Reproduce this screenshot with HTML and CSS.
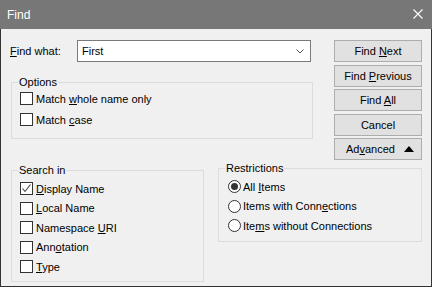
FILE: index.html
```html
<!DOCTYPE html>
<html lang="en">
<head>
    <meta charset="UTF-8">
    <title>Find</title>
    <link rel="stylesheet" href="styles.css">
</head>
<body>
    <div class="window">
        <header class="titlebar">
            <span class="title">Find</span>
            <svg class="close" width="10" height="10" viewBox="0 0 10 10">
                <path d="M0.5 0.5 L9.5 9.5 M9.5 0.5 L0.5 9.5" stroke="#fff" stroke-width="1.1" fill="none"/>
            </svg>
        </header>
        <div class="client">
            <div class="top">
                <div class="left">
                    <div class="find-row">
                        <label class="find-label"><u>F</u>ind what:</label>
                        <div class="combo">
                            <span>First</span>
                            <svg class="chevron" width="8" height="5" viewBox="0 0 8 5">
                                <path d="M0.5 0.5 L4 4 L7.5 0.5" stroke="#555" stroke-width="1" fill="none"/>
                            </svg>
                        </div>
                    </div>
                    <fieldset class="group options">
                        <legend>Options</legend>
                        <div class="check"><span class="box"></span><span>Match <u>w</u>hole name only</span></div>
                        <div class="check"><span class="box"></span><span>Match <u>c</u>ase</span></div>
                    </fieldset>
                </div>
                <div class="buttons">
                    <button>Find <u>N</u>ext</button>
                    <button>Find <u>P</u>revious</button>
                    <button>Find <u>A</u>ll</button>
                    <button>Cancel</button>
                    <button class="advanced"><span>Ad<u>v</u>anced</span><span class="tri"></span></button>
                </div>
            </div>
            <div class="bottom">
                <fieldset class="group search">
                    <legend>Search in</legend>
                    <div class="check"><span class="box checked">
                        <svg width="11" height="11" viewBox="0 0 11 11"><path d="M1.5 5.5 L4 8.5 L9.5 1.5" stroke="#444" stroke-width="1.1" fill="none"/></svg>
                    </span><span><u>D</u>isplay Name</span></div>
                    <div class="check"><span class="box"></span><span><u>L</u>ocal Name</span></div>
                    <div class="check"><span class="box"></span><span>Namespace <u>U</u>RI</span></div>
                    <div class="check"><span class="box"></span><span>Ann<u>o</u>tation</span></div>
                    <div class="check"><span class="box"></span><span><u>T</u>ype</span></div>
                </fieldset>
                <fieldset class="group restrictions">
                    <legend>Restrictions</legend>
                    <div class="radio"><span class="dot checked"></span><span>All <u>I</u>tems</span></div>
                    <div class="radio"><span class="dot"></span><span>Items with Conn<u>e</u>ctions</span></div>
                    <div class="radio"><span class="dot"></span><span>Ite<u>m</u>s without Connections</span></div>
                </fieldset>
            </div>
        </div>
    </div>
</body>
</html>
```

FILE: styles.css
```css
body {
    margin: 0;
    font-family: "Liberation Sans", Arial, sans-serif;
    font-size: 11px;
    color: #000;
}

.window {
    width: 432px;
    height: 287px;
    display: flex;
    flex-direction: column;
}

.titlebar {
    height: 29px;
    background-color: #777777;
    color: #fff;
    display: flex;
    align-items: center;
    justify-content: space-between;
    padding: 0 9px 0 7px;
    font-size: 12px;
}

.close {
    margin-top: -1px;
}

.client {
    flex: 1;
    background-color: #f0f0f0;
    border: 1px solid #333;
    border-top: none;
    padding: 11px 9px 0 10px;
}

u {
    text-decoration-thickness: 1px;
    text-underline-offset: 1px;
}

.top {
    display: flex;
    gap: 21px;
}

.left {
    width: 302px;
}

.find-row {
    display: flex;
    align-items: center;
}

.find-label {
    width: 67px;
    margin-left: -1px;
}

.combo {
    width: 234px;
    height: 22px;
    box-sizing: border-box;
    border: 1px solid #7a7a7a;
    background-color: #fff;
    display: flex;
    align-items: center;
    justify-content: space-between;
    padding: 0 6px 0 4px;
}

.group {
    margin: 0;
    padding: 0 8px 6px 6px;
    border: 1px solid #dcdcdc;
    min-width: 0;
}

.group legend {
    padding: 0 1px;
}

.options {
    margin-top: 14px;
    padding-bottom: 8px;
}

.check,
.radio {
    display: flex;
    align-items: center;
    height: 19.5px;
}

.options .check {
    height: 21px;
}

.box {
    width: 13px;
    height: 13px;
    box-sizing: border-box;
    border: 1px solid #333;
    background-color: #fff;
    margin: 0 3px 0 2px;
    display: flex;
    align-items: center;
    justify-content: center;
}

.dot {
    width: 13px;
    height: 13px;
    box-sizing: border-box;
    border: 1px solid #333;
    border-radius: 50%;
    background-color: #fff;
    margin: 0 2px 0 3px;
    display: flex;
    align-items: center;
    justify-content: center;
}

.dot.checked::after {
    content: "";
    width: 7px;
    height: 7px;
    border-radius: 50%;
    background-color: #333;
}

.buttons {
    width: 88px;
    display: flex;
    flex-direction: column;
    gap: 2.5px;
}

.buttons button {
    height: 22px;
    font-family: inherit;
    font-size: 11px;
    background-color: #e1e1e1;
    border: 1px solid #adadad;
    padding: 0;
    color: #000;
}

.buttons .advanced {
    display: flex;
    align-items: center;
    justify-content: space-between;
    padding: 0 7px 0 11px;
}

.tri {
    width: 0;
    height: 0;
    border-left: 5px solid transparent;
    border-right: 5px solid transparent;
    border-bottom: 6px solid #000;
}

.bottom {
    display: flex;
    align-items: flex-start;
    gap: 14px;
    margin-top: 2px;
}

.search {
    width: 193px;
    box-sizing: border-box;
    margin-top: 2px;
    padding-top: 3px;
    padding-bottom: 4px;
}

.restrictions {
    flex: 1;
    padding-top: 3px;
    padding-bottom: 5px;
}
```
